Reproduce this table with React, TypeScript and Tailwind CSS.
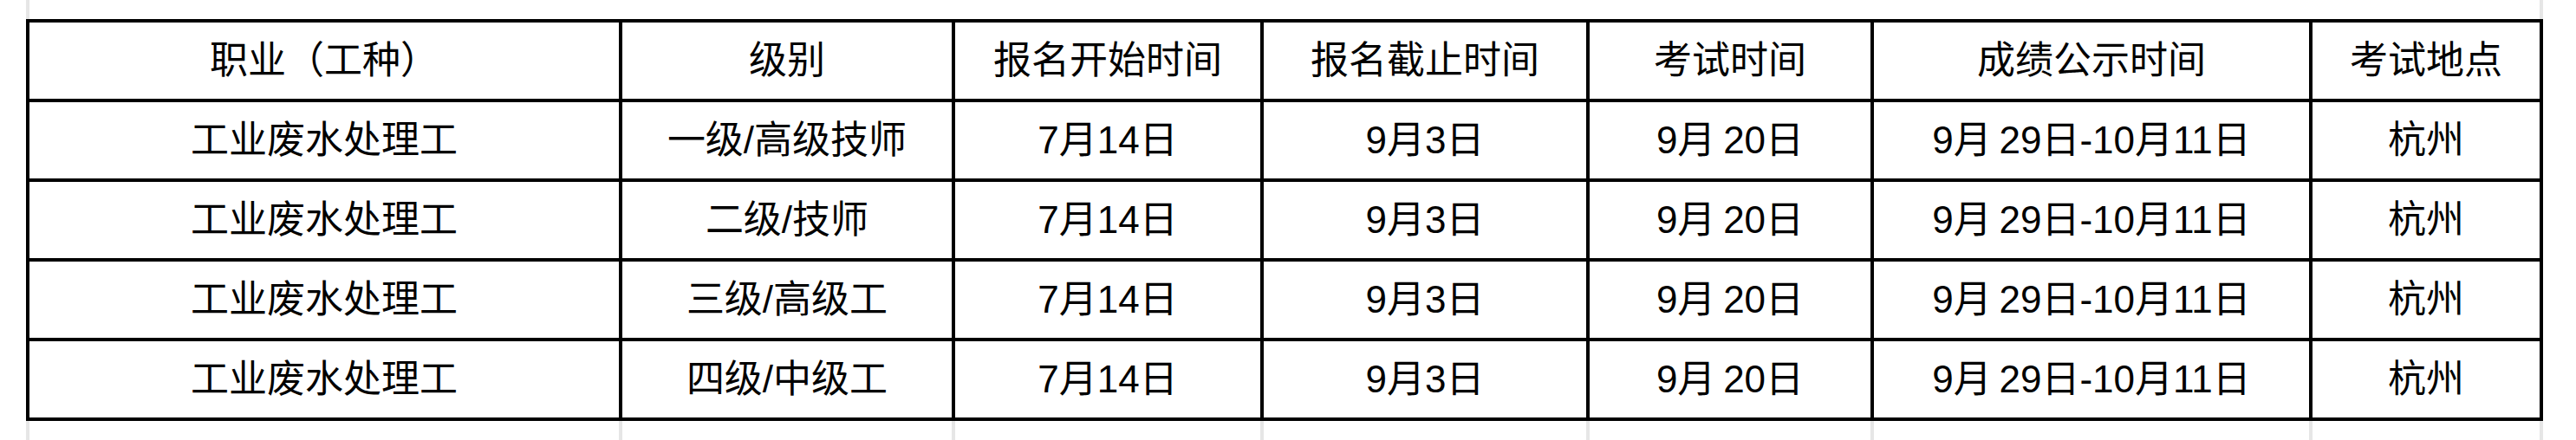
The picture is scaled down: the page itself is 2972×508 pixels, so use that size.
const header = ["职业（工种）", "级别", "报名开始时间", "报名截止时间", "考试时间", "成绩公示时间", "考试地点"]

const levels = ["一级/高级技师", "二级/技师", "三级/高级工", "四级/中级工"]

const rows = levels.map((level) => [
  "工业废水处理工",
  level,
  "7月14日",
  "9月3日",
  "9月\u200920日",
  "9月\u200929日-10月11日",
  "杭州",
])

const cols = "grid-cols-[680px_380px_352px_372px_324px_502px_262px]"

export default function App() {
  return (
    <div className="w-[2972px] h-[508px] bg-white font-['Liberation_Sans','Noto_Sans_CJK_SC',sans-serif] text-black">
      {/* faint sheet gridlines above the table */}
      <div className="h-[22px] ml-[30px] w-[2904px] flex justify-between">
        <div className="w-[4px] h-full bg-[#e6e6e6]" />
        <div className="w-[4px] h-full bg-[#e6e6e6]" />
      </div>

      <div className={`ml-[30px] w-fit grid ${cols} gap-[4px] p-[4px] bg-black`}>
        {header.map((h) => (
          <div key={h} className="h-[88px] bg-white flex items-center justify-center text-[44px] leading-none">
            {h}
          </div>
        ))}
        {rows.map((r, i) =>
          r.map((cell, j) => (
            <div key={`${i}-${j}`} className="h-[88px] bg-white flex items-center justify-center text-[44px] leading-none whitespace-pre">
              {cell}
            </div>
          ))
        )}
      </div>

      {/* gridlines continuing below */}
      <div className={`ml-[30px] w-fit grid ${cols} gap-[4px] px-[4px] bg-[#e6e6e6] h-[22px]`}>
        {header.map((h) => (
          <div key={h} className="bg-white" />
        ))}
      </div>
    </div>
  )
}
